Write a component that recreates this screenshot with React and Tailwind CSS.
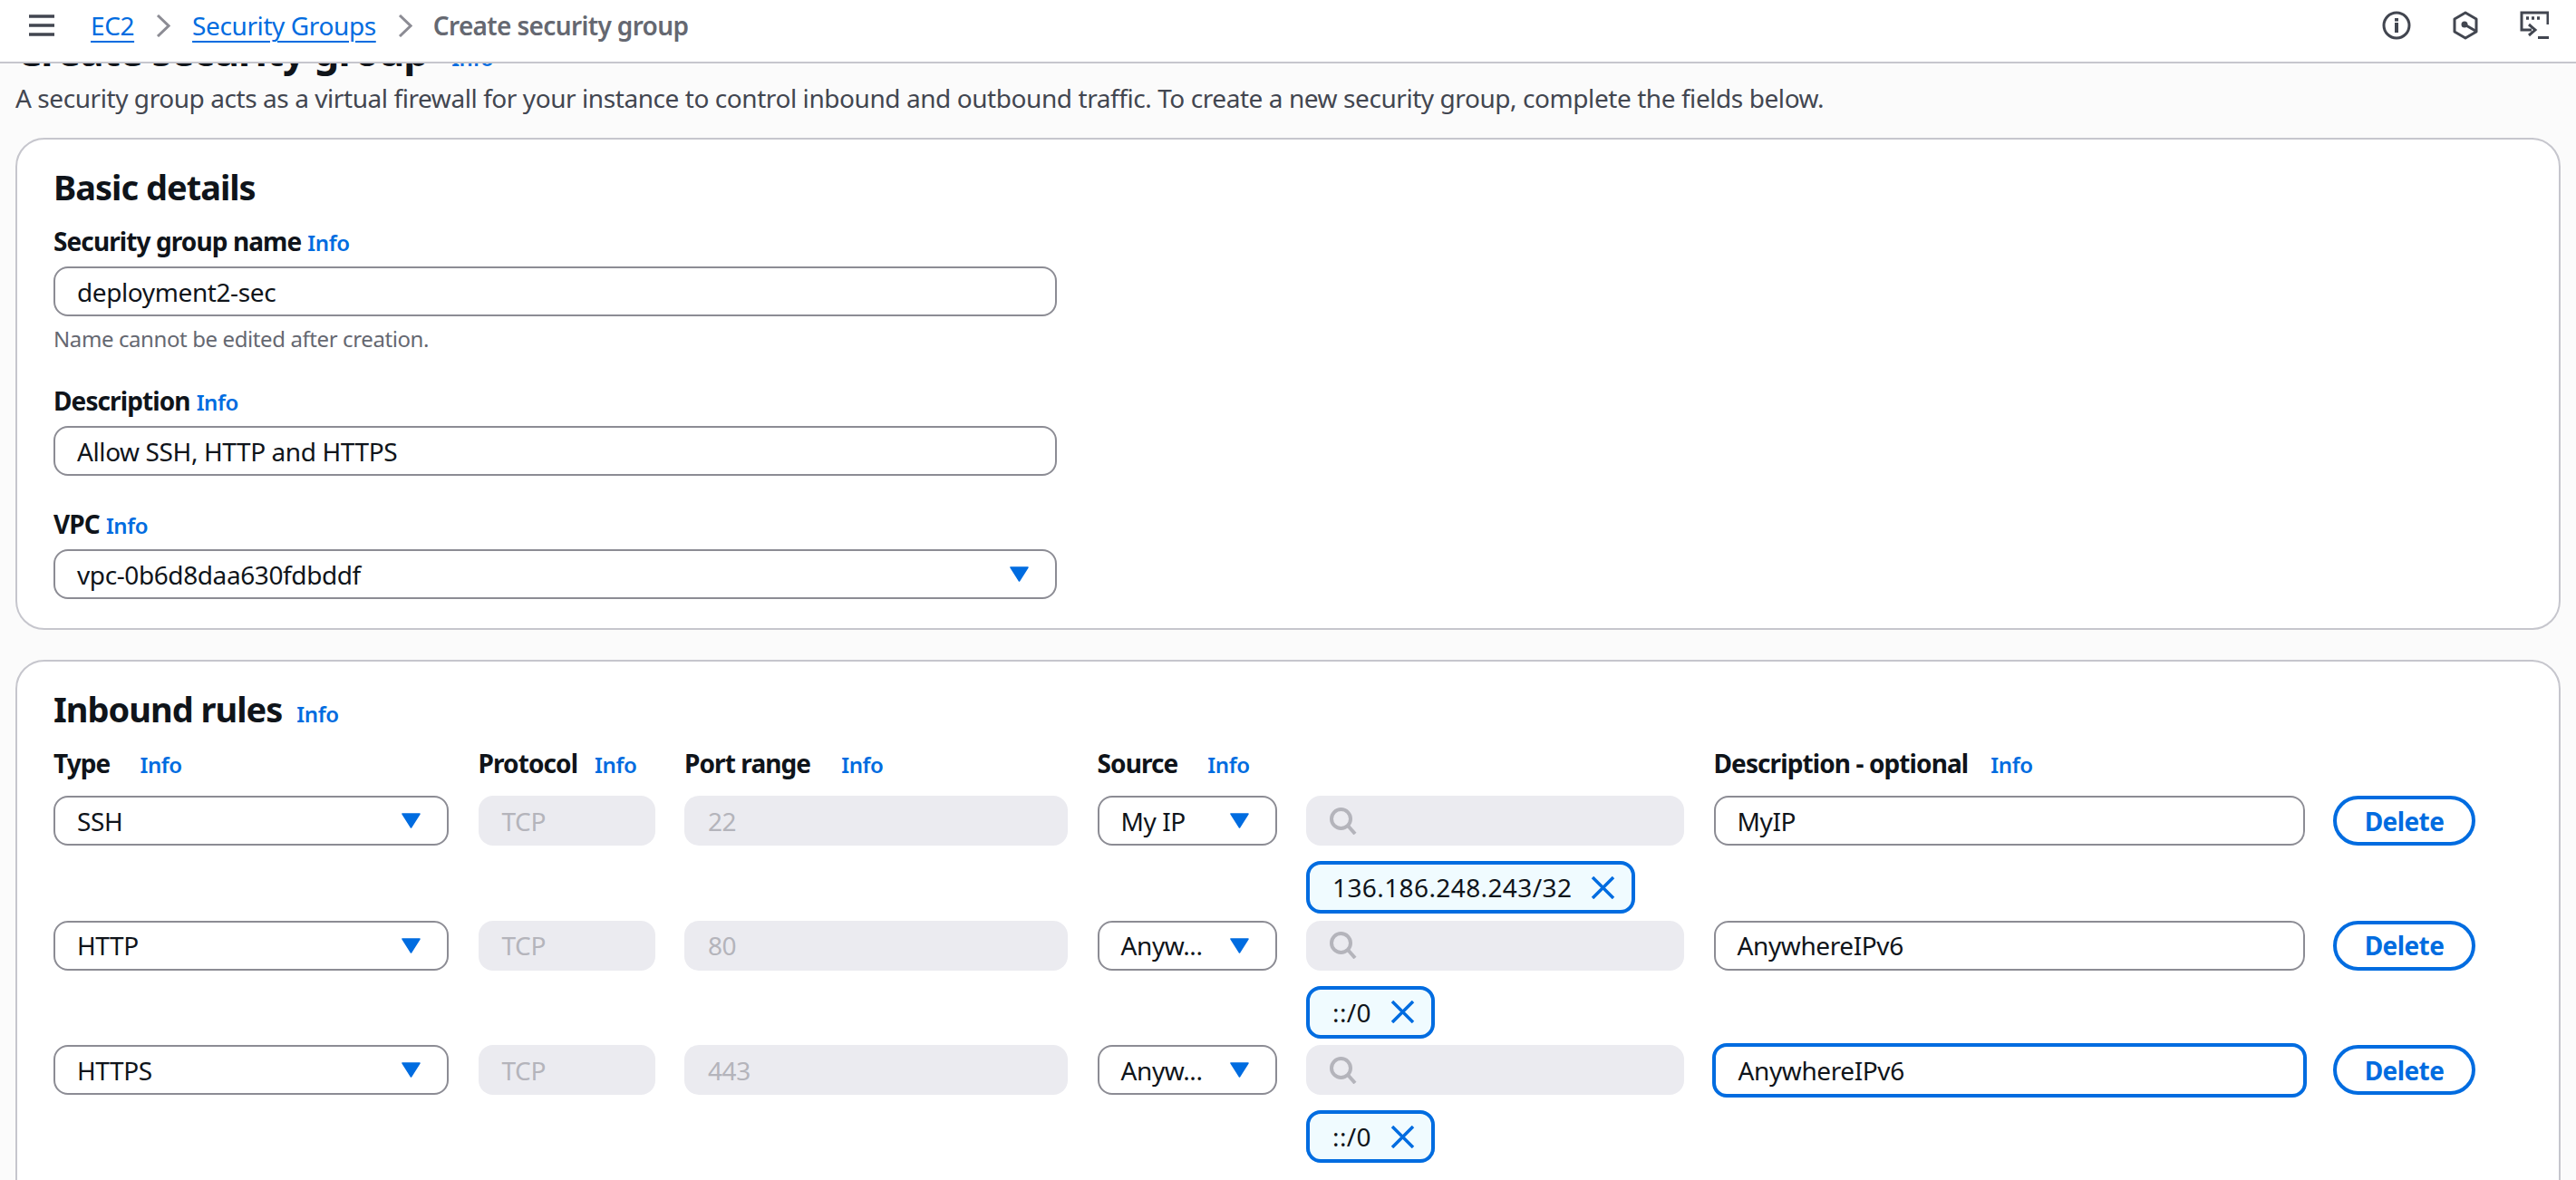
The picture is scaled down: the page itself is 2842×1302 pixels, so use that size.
import React from 'react';

const Info = ({ className = '' }) => (
  <a className={`text-[24px] leading-[28px] tracking-[-0.4px] font-semibold text-[#006ce0] ${className}`}>Info</a>
);

const Label = ({ children, className = '' }) => (
  <div className={`flex items-baseline gap-[7px] text-[28px] leading-[32px] tracking-[-0.9px] font-bold text-[#0f141a] ${className}`}>
    {children}
  </div>
);

const Caret = () => (
  <svg viewBox="0 0 21 17" className="w-[21px] h-[17px] shrink-0" fill="#006ce0">
    <path d="M1 1 H20 L10.5 16 Z" stroke="#006ce0" strokeWidth="1.5" strokeLinejoin="round" />
  </svg>
);

const Chevron = () => (
  <svg viewBox="0 0 16 25" className="w-[16px] h-[25px]" fill="none" stroke="#8c8c94" strokeWidth="3">
    <path d="M2 1 L14 12.5 L2 24" />
  </svg>
);

const Field = ({ value, focused }) => (
  <div
    className={`flex items-center rounded-[16px] bg-white text-[28px] tracking-[-0.4px] text-[#0f141a] whitespace-nowrap ${
      focused ? 'h-[60px] -my-[2px] -mx-[2px] px-[25px] border-[4px] border-[#006ce0]' : 'h-[55px] px-[24px] border-2 border-[#8c8c94]'
    }`}
  >
    {value}
  </div>
);

const Select = ({ value }) => (
  <div className="flex items-center justify-between h-[55px] pl-[24px] pr-[29px] rounded-[16px] bg-white border-2 border-[#8c8c94] text-[28px] tracking-[-0.4px] text-[#0f141a] whitespace-nowrap">
    <span>{value}</span>
    <Caret />
  </div>
);

const Disabled = ({ value }) => (
  <div className="flex items-center h-[55px] px-[26px] rounded-[16px] bg-[#ebebf0] text-[28px] tracking-[-0.4px] text-[#b4b4bb]">{value}</div>
);

const Chip = ({ value }) => (
  <div className="inline-flex items-center gap-[21px] h-[58px] pl-[25px] pr-[18px] rounded-[16px] bg-[#f0fbff] border-[4px] border-[#006ce0] text-[28px] tracking-[0.4px] text-[#0f141a] whitespace-nowrap">
    {value}
    <svg viewBox="0 0 27 25" className="w-[27px] h-[25px]" fill="none" stroke="#006ce0" strokeWidth="3.5">
      <path d="M2 1 L25 24 M25 1 L2 24" />
    </svg>
  </div>
);

const rules = [
  { type: 'SSH', port: '22', source: 'My IP', chip: '136.186.248.243/32', desc: 'MyIP' },
  { type: 'HTTP', port: '80', source: 'Anyw...', chip: '::/0', desc: 'AnywhereIPv6' },
  { type: 'HTTPS', port: '443', source: 'Anyw...', chip: '::/0', desc: 'AnywhereIPv6', focused: true },
];

const gridCols = 'grid grid-cols-[436px_195px_423px_198px_417px_652px_156px] gap-x-[32.5px]';

export default function App() {
  return (
    <div className="h-[1302px] w-[2842px] overflow-hidden flex flex-col bg-[#fbfbfb] font-['Noto_Sans'] text-[#0f141a]">
      <header className="relative z-10 h-[70px] shrink-0 bg-white border-b-2 border-[#c6c6cd] flex items-center justify-between pl-[32px] pr-[30px] pb-[12px]">
        <nav className="flex items-center text-[28px] leading-[32px] tracking-[-0.4px]">
          <svg viewBox="0 0 28 24" className="w-[28px] h-[24px] mr-[40px]" fill="none" stroke="#424650" strokeWidth="3.5">
            <path d="M0 2h28M0 12h28M0 22h28" />
          </svg>
          <a className="text-[#006ce0] underline underline-offset-[6px] decoration-2">EC2</a>
          <span className="mx-[24px]"><Chevron /></span>
          <a className="text-[#006ce0] underline underline-offset-[6px] decoration-2">Security Groups</a>
          <span className="ml-[24px] mr-[23px]"><Chevron /></span>
          <span className="font-semibold tracking-[-0.65px] text-[#656871]">Create security group</span>
        </nav>
        <div className="flex items-center gap-[46px] text-[#424650]">
          <svg viewBox="0 0 32 32" className="w-[32px] h-[32px]" fill="none" stroke="currentColor" strokeWidth="3">
            <circle cx="16" cy="16" r="14" />
            <path d="M16 13v11M16 8v3.5" strokeWidth="4" />
          </svg>
          <svg viewBox="0 0 28 32" className="w-[28px] h-[32px]" fill="none" stroke="currentColor" strokeWidth="3">
            <path d="M14 2 26 9v14l-12 7-12-7V9z" strokeLinejoin="round" />
            <circle cx="13" cy="15" r="3.5" fill="currentColor" stroke="none" />
            <path d="M13 15l12 7" />
          </svg>
          <svg viewBox="0 0 32 32" className="w-[32px] h-[32px]" fill="none" stroke="currentColor" strokeWidth="3">
            <path d="M13 21H2V2h29v13" />
            <path d="M7 8h3M13 8h3M19 8h3" strokeWidth="3.5" />
            <path d="M10 15l7 6-7 6" />
            <path d="M20 29.5h12" />
          </svg>
        </div>
      </header>

      <main className="flex-1 min-h-0 overflow-hidden px-[17px]">
        <div className="flex items-baseline gap-[26px] -mt-[41px] h-[54px] pl-[1px]">
          <h1 className="text-[44px] leading-[54px] tracking-[-1px] font-bold">Create security group</h1>
          <Info />
        </div>
        <p className="mt-[9px] text-[28px] leading-[32px] tracking-[-0.43px] text-[#424650]">
          A security group acts as a virtual firewall for your instance to control inbound and outbound traffic. To create a new security group, complete the fields below.
        </p>

        <section className="mt-[28px] h-[543px] rounded-[32px] border-2 border-[#c6c6cd] bg-white pt-[30px] px-[40px]">
          <h2 className="text-[38px] leading-[44px] tracking-[-1px] font-bold">Basic details</h2>
          <div className="w-[1107px]">
            <Label className="mt-[22px]">Security group name <Info /></Label>
            <div className="mt-[12px]"><Field value="deployment2-sec" /></div>
            <p className="mt-[10px] text-[24px] leading-[30px] tracking-[-0.4px] text-[#656871]">Name cannot be edited after creation.</p>
            <Label className="mt-[37px]">Description <Info /></Label>
            <div className="mt-[12px]"><Field value="Allow SSH, HTTP and HTTPS" /></div>
            <Label className="mt-[37px]">VPC <Info /></Label>
            <div className="mt-[12px]"><Select value="vpc-0b6d8daa630fdbddf" /></div>
          </div>
        </section>

        <section className="mt-[33px] h-[700px] rounded-[32px] border-2 border-[#c6c6cd] bg-white pt-[30px] px-[40px]">
          <div className="flex items-baseline gap-[16px]">
            <h2 className="text-[38px] leading-[44px] tracking-[-1px] font-bold">Inbound rules</h2>
            <Info />
          </div>
          <div className={`${gridCols} mt-[22px] h-[32px]`}>
            <Label className="gap-[33px]">Type <Info /></Label>
            <Label className="gap-[19px]">Protocol <Info /></Label>
            <Label className="gap-[34px]">Port range <Info /></Label>
            <Label className="gap-[33px]">Source <Info /></Label>
            <div />
            <Label className="gap-[25px]">Description - optional <Info /></Label>
          </div>
          <div className="mt-[20px]">
            {rules.map((r) => (
              <div key={r.type} className={`${gridCols} h-[137.5px]`}>
                <Select value={r.type} />
                <Disabled value="TCP" />
                <Disabled value={r.port} />
                <Select value={r.source} />
                <div className="flex flex-col items-start gap-[17px]">
                  <div className="flex items-center w-full h-[55px] pl-[26px] rounded-[16px] bg-[#ebebf0]">
                    <svg viewBox="0 0 30 30" className="w-[30px] h-[30px]" fill="none" stroke="#b4b4bb" strokeWidth="4">
                      <circle cx="12.5" cy="12.5" r="10.5" />
                      <path d="M20 20 L28 29" />
                    </svg>
                  </div>
                  <Chip value={r.chip} />
                </div>
                <Field value={r.desc} focused={r.focused} />
                <button className="h-[55px] -ml-[1px] rounded-[28px] border-[4px] border-[#006ce0] text-[28px] tracking-[-0.6px] font-bold text-[#006ce0]">Delete</button>
              </div>
            ))}
          </div>
        </section>
      </main>
    </div>
  );
}
